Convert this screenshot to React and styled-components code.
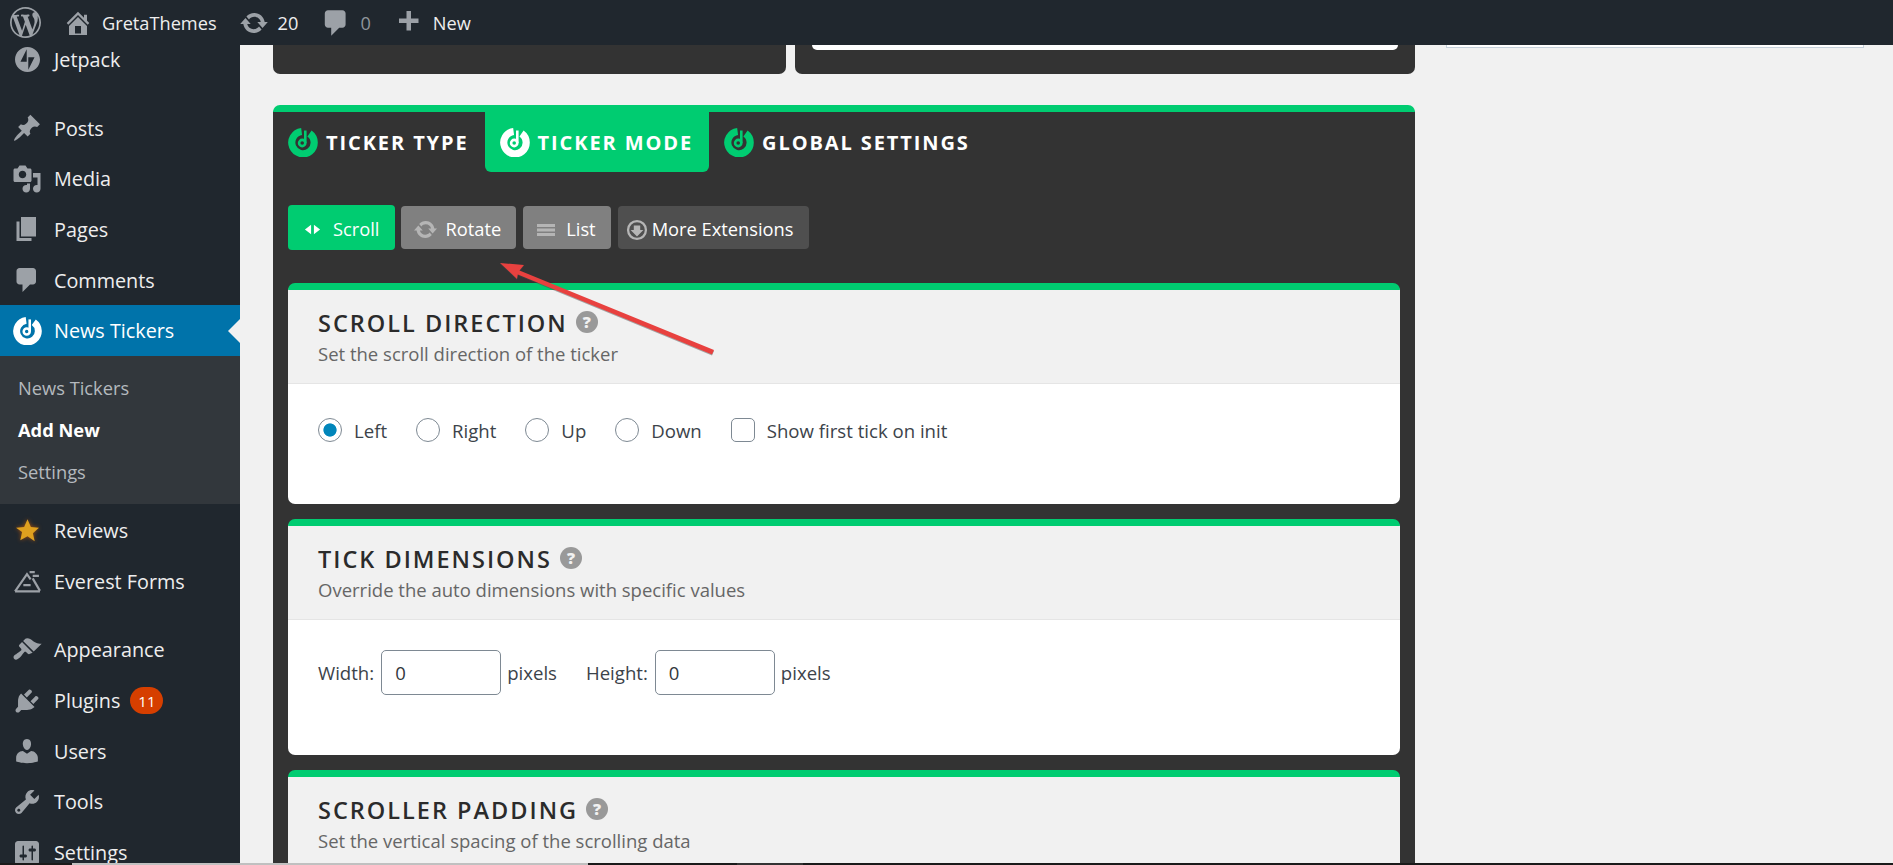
import styled, { createGlobalStyle } from "styled-components"

const GREEN = "#00cc71"

const GlobalStyle = createGlobalStyle`
    html, body {
        margin: 0;
        height: 100%;
        overflow: hidden;
        background: #f1f1f1;
        font-family: "Open Sans", "Noto Sans", sans-serif;
    }
    * { box-sizing: border-box; }
`

const Page = styled.div`
    width: 1893px;
    height: 865px;
    display: flex;
    flex-direction: column;
`

/* top admin bar */
const TopBar = styled.header`
    height: 45px;
    flex: none;
    display: flex;
    align-items: center;
    padding-left: 10px;
    background: #20272e;
`
const BarItem = styled.div`
    display: flex;
    align-items: center;
    gap: ${props => props.$gap ?? 9}px;
    margin-right: 22px;
    font-size: 18.2px;
    color: ${props => props.$dim ? "#8f959b" : "#eeeeee"};
`

const Svg = styled.svg`
    flex: none;
    width: ${props => props.$size ?? 30}px;
    height: ${props => props.$size ?? 30}px;
    fill: ${props => props.$color ?? "#9ca1a7"};
`

const Icon = ({ d, size, color, box = 20 }) => (
    <Svg viewBox={`0 0 ${box} ${box}`} $size={size} $color={color}><path d={d} /></Svg>
)

const paths = {
    wp: "M20 10c0-5.51-4.49-10-10-10C4.48 0 0 4.49 0 10c0 5.52 4.48 10 10 10 5.51 0 10-4.48 10-10zM7.78 15.37L4.37 6.22c.55-.02 1.17-.08 1.17-.08.5-.06.44-1.13-.06-1.11 0 0-1.45.11-2.37.11-.18 0-.37 0-.58-.01C4.12 2.69 6.87 1.11 10 1.11c2.33 0 4.45.87 6.05 2.34-.68-.11-1.65.39-1.65 1.58 0 .74.45 1.36.9 2.1.35.61.55 1.36.55 2.46 0 1.49-1.4 5-1.4 5l-3.03-8.37c.54-.02.82-.17.82-.17.5-.05.44-1.25-.06-1.22 0 0-1.44.12-2.38.12-.87 0-2.33-.12-2.33-.12-.5-.03-.56 1.2-.06 1.22l.92.08 1.26 3.41zM17.41 10c.24-.64.74-1.87.43-4.25.7 1.29 1.05 2.71 1.05 4.25 0 3.29-1.73 6.24-4.4 7.78.97-2.59 1.94-5.2 2.92-7.78zM6.1 18.09C3.12 16.65 1.11 13.53 1.11 10c0-1.3.23-2.48.72-3.59C3.25 10.3 4.67 14.2 6.1 18.09zm4.03-6.63l2.58 6.98c-.86.29-1.76.45-2.71.45-.79 0-1.57-.11-2.29-.33.81-2.38 1.62-4.74 2.42-7.1z",
    home: "M16 8.5l1.53 1.53-1.06 1.06L10 4.62l-6.47 6.47-1.06-1.06L10 2.5l4 4v-2h2v4zm-6-2.46l6 5.99V18H4v-5.97zM12 17v-5H8v5h4z",
    update: "M10.2 3.28c3.53 0 6.43 2.61 6.92 6h2.08l-3.5 4-3.5-4h2.32c-.45-1.97-2.21-3.45-4.32-3.45-1.45 0-2.73.71-3.54 1.78L4.95 5.66C6.23 4.2 8.11 3.28 10.2 3.28zm-.4 13.44c-3.52 0-6.43-2.61-6.92-6H.8l3.5-4c1.17 1.33 2.33 2.67 3.5 4H5.48c.45 1.97 2.21 3.45 4.32 3.45 1.45 0 2.73-.71 3.54-1.78l1.71 1.95c-1.28 1.46-3.15 2.38-5.25 2.38z",
    comment: "M5 2h9c1.1 0 2 .9 2 2v7c0 1.1-.9 2-2 2h-2l-5 5v-5H5c-1.1 0-2-.9-2-2V4c0-1.1.9-2 2-2z",
    plus: "M17 7v3h-5v5H9v-5H4V7h5V2h3v5h5z",
    post: "M10.44 3.02l1.82-1.82 6.36 6.35-1.83 1.82c-1.05-.68-2.48-.57-3.41.36l-.75.75c-.92.93-1.04 2.35-.35 3.41l-1.83 1.82-2.41-2.41-2.8 2.79c-.42.42-3.38 2.71-3.8 2.29s1.86-3.39 2.28-3.81l2.79-2.79L4.1 9.36l1.83-1.82c1.05.69 2.48.57 3.4-.36l.75-.75c.93-.92 1.05-2.35.36-3.41z",
    media: "M13 11V4c0-.55-.45-1-1-1h-1.67L9 1H5L3.67 3H2c-.55 0-1 .45-1 1v7c0 .55.45 1 1 1h10c.55 0 1-.45 1-1zM7 4.5c1.38 0 2.5 1.12 2.5 2.5S8.38 9.5 7 9.5 4.5 8.38 4.5 7 5.62 4.5 7 4.5zM14 6h5v10.5c0 1.38-1.12 2.5-2.5 2.5S14 17.88 14 16.5s1.12-2.5 2.5-2.5c.17 0 .34.02.5.05V9h-3V6zm-4 8.05V13h2v3.5c0 1.38-1.12 2.5-2.5 2.5S7 17.88 7 16.5 8.12 14 9.5 14c.17 0 .34.02.5.05z",
    page: "M6 15V2h10v13H6zm-1 1h8v2H3V5h2v11z",
    appearance: "M14.48 11.06L7.41 3.99l1.5-1.5c.5-.56 2.3-.47 3.51.32 1.21.8 1.43 1.28 2.91 2.1 1.18.64 2.45 1.26 4.45.85zm-.71.71L6.7 4.7 4.93 6.47c-.39.39-.39 1.02 0 1.41l1.06 1.06c.39.39.39 1.03 0 1.42-.6.6-1.43 1.11-2.21 1.69-.35.26-.7.53-1.01.84C1.43 13.23.4 14.85 1.5 15.96c1.1 1.1 2.73.07 4.07-1.27.31-.31.58-.66.85-1.01.58-.78 1.09-1.61 1.69-2.21.39-.39 1.02-.39 1.41 0l1.06 1.06c.39.39 1.02.39 1.41 0z",
    plugins: "M13.11 4.36L9.87 7.6 8 5.73l3.24-3.24c.35-.34 1.05-.2 1.56.32.52.51.66 1.21.31 1.55zm-8 1.77l.91-1.12 9.01 9.01-1.19.84c-.71.71-2.63 1.16-3.82 1.16H6.14L4.9 17.26c-.59.59-1.54.59-2.12 0-.59-.58-.59-1.53 0-2.12l1.24-1.24v-3.88c0-1.13.4-3.19 1.09-3.89zm7.26 3.97l3.24-3.24c.34-.35 1.04-.21 1.55.31.52.51.66 1.21.31 1.55l-3.24 3.25z",
    users: "M10 9.25c-2.27 0-2.73-3.44-2.73-3.44C7 4.02 7.82 2 9.97 2c2.16 0 2.98 2.02 2.71 3.81 0 0-.41 3.44-2.68 3.44zm0 2.57L12.72 10c2.39 0 4.52 2.33 4.52 4.53v2.49s-3.65 1.13-7.24 1.13c-3.65 0-7.24-1.13-7.24-1.13v-2.49c0-2.25 1.94-4.48 4.47-4.48z",
    tools: "M16.68 9.77c-1.34 1.34-3.3 1.67-4.95.99l-5.41 6.52c-.99.99-2.59.99-3.58 0s-.99-2.59 0-3.57l6.52-5.42c-.68-1.65-.35-3.61.99-4.95 1.28-1.28 3.12-1.62 4.72-1.06l-2.89 2.89 2.82 2.82 2.86-2.87c.53 1.58.18 3.39-1.08 4.65zM3.81 16.21c.4.39 1.04.39 1.43 0 .4-.4.4-1.04 0-1.43-.39-.4-1.03-.4-1.43 0-.39.39-.39 1.03 0 1.43z",
    settings: "M18 16V4c0-1.1-.9-2-2-2H4c-1.1 0-2 .9-2 2v12c0 1.1.9 2 2 2h12c1.1 0 2-.9 2-2zM8 11h1c.55 0 1 .45 1 1s-.45 1-1 1H8v1.5c0 .28-.22.5-.5.5s-.5-.22-.5-.5V13H6c-.55 0-1-.45-1-1s.45-1 1-1h1V5.5c0-.28.22-.5.5-.5s.5.22.5.5V11zm5-2h-1c-.55 0-1-.45-1-1s.45-1 1-1h1V5.5c0-.28.22-.5.5-.5s.5.22.5.5V7h1c.55 0 1 .45 1 1s-.45 1-1 1h-1v5.5c0 .28-.22.5-.5.5s-.5-.22-.5-.5V9z",
    jetpack: "M16 0C7.2 0 0 7.2 0 16s7.2 16 16 16 16-7.2 16-16S24.8 0 16 0zM15 19H7l8-16v16zm2 10V13h8l-8 16z",
}

// the plugin's round logo: an open ring with a small note inside
const TickerLogo = ({ color, size = 30 }) => (
    <Svg viewBox="0 0 30 30" $size={size} $color="none">
        <path d="M13.6 4.5 A11.2 11.2 0 1 0 21.5 6.5" stroke={color} strokeWidth="7.2" fill="none" />
        <circle cx="14.2" cy="16" r="3.1" stroke={color} strokeWidth="2.6" fill="none" />
        <path d="M17.3 16 V3.5" stroke={color} strokeWidth="2.6" fill="none" />
    </Svg>
)

const Star = () => (
    <Svg viewBox="0 0 24 24" $size={27} $color="#dfa01f" style={{ filter: "drop-shadow(0 0 2px #a4500e)" }}>
        <path d="M12 2l3 6.8 7.2.7-5.4 4.9 1.6 7.2L12 17l-6.4 3.6 1.6-7.2L1.8 9.5 9 8.8z" />
    </Svg>
)

const EverestIcon = () => (
    <Svg viewBox="0 0 26 22" $size={27} $color="none">
        <path d="M1 20.5 L12.5 4 L16 9 M1 20.5 H25" stroke="#9ca1a7" strokeWidth="2.1" fill="none" />
        <path d="M18 8 L25 20" stroke="#9ca1a7" strokeWidth="2.1" fill="none" />
        <path d="M9 14.5 h7 M15 2 h5 M18 5.5 h6" stroke="#9ca1a7" strokeWidth="2.1" fill="none" />
    </Svg>
)

/* left menu */
const Body = styled.div`
    flex: 1;
    min-height: 0;
    display: flex;
    position: relative;
    overflow: hidden;
`
const Sidebar = styled.nav`
    width: 240px;
    flex: none;
    background: #20272e;
`
const MenuList = styled.div`
    margin-top: -11px;
`
const MenuItem = styled.div`
    height: 50.7px;
    display: flex;
    align-items: center;
    gap: 12px;
    padding-left: 12px;
    position: relative;
    font-size: 19.8px;
    color: ${props => props.$active ? "#ffffff" : "#eeeeee"};
    background: ${props => props.$active ? "#0073aa" : "transparent"};
    margin-bottom: ${props => props.$gapBelow ?? 0}px;

    ${props => props.$active && `
        &::after {
            content: "";
            position: absolute;
            right: 0;
            top: 14px;
            border: 12px solid transparent;
            border-left: 0;
            border-right-color: #f1f1f1;
        }
    `}
`
const IconSlot = styled.span`
    width: 30px;
    height: 30px;
    flex: none;
    display: flex;
    align-items: center;
    justify-content: center;
`
const SubMenu = styled.div`
    padding: 11px 0;
    margin-bottom: 1px;
    background: #32373c;
`
const SubItem = styled.div`
    height: 42px;
    display: flex;
    align-items: center;
    padding: 0 0 2px 18px;
    font-size: 18.3px;
    font-weight: ${props => props.$current ? 700 : 400};
    color: ${props => props.$current ? "#ffffff" : "#b4b9be"};
`
const Badge = styled.span`
    height: 27px;
    padding: 0 8px;
    margin-left: -2px;
    display: flex;
    align-items: center;
    border-radius: 14px;
    background: #d63f00;
    color: #ffffff;
    font-size: 15px;
`

/* content */
const Main = styled.main`
    flex: 1;
    display: flex;
    align-items: flex-start;
    padding-left: 33px;
    background: #f1f1f1;
`
const Column = styled.div`
    width: 1142px;
    flex: none;
`
const TopPanels = styled.div`
    display: flex;
    gap: 9px;
    height: 29px;
`
const TopPanel = styled.div`
    flex: 0 0 ${props => props.$width}px;
    height: 29px;
    padding: 0 17px;
    background: #333333;
    border-radius: 0 0 7px 7px;
`
const TopPanelInner = styled.div`
    height: 5px;
    background: #ffffff;
    border-radius: 0 0 6px 6px;
`
const SideWidget = styled.aside`
    width: 418px;
    height: 3px;
    margin-left: 31px;
    background: #ffffff;
    border: 1px solid #c5d0da;
    border-top: 0;
`
const Panel = styled.section`
    margin-top: 31px;
    background: #333333;
    border-top: 7px solid ${GREEN};
    border-radius: 7px 7px 0 0;
`
const Tabs = styled.div`
    display: flex;
    height: 60px;
`
const Tab = styled.div`
    display: flex;
    align-items: center;
    gap: 8px;
    padding: 0 16px 0 15px;
    font-size: 20px;
    font-weight: 700;
    letter-spacing: 1.9px;
    color: #ffffff;
    border-radius: 0 0 6px 6px;
    background: ${props => props.$active ? GREEN : "transparent"};
`
const PanelBody = styled.div`
    padding: 33px 15px 0;
`
const ModeButtons = styled.div`
    display: flex;
    align-items: center;
    gap: 7px;
    margin-bottom: 33px;

    & > :first-child {
        margin-right: -1px;
    }
`
const ModeButton = styled.button`
    height: ${props => props.$active ? 45 : 43}px;
    display: flex;
    align-items: center;
    gap: ${props => props.$gap}px;
    padding: 2px ${props => props.$right}px 0 ${props => props.$left}px;
    border: 0;
    border-radius: 4px;
    font-family: inherit;
    font-size: 18.3px;
    color: #ffffff;
    background: ${props => props.$bg};
`
const ModeGlyph = styled.span`
    display: flex;
    margin-top: 2px;
`

const Card = styled.div`
    margin-bottom: 15px;
    background: #ffffff;
    border-top: 7px solid ${GREEN};
    border-radius: 7px;
    overflow: hidden;
`
const CardHead = styled.div`
    padding: 18px 30px 17px;
    background: #f1f1f1;
    border-bottom: 1px solid #e5e5e5;
`
const CardTitle = styled.h3`
    margin: 0;
    display: flex;
    align-items: flex-start;
    gap: 8px;
    height: 30px;
    line-height: 30px;
    font-size: 23.5px;
    font-weight: 600;
    letter-spacing: 2px;
    color: #2b2b2b;
`
const Help = styled.span`
    width: 22px;
    height: 22px;
    margin-top: 3px;
    display: flex;
    align-items: center;
    justify-content: center;
    border-radius: 50%;
    background: #999999;
    color: #f1f1f1;
    font-size: 16px;
    line-height: 22px;
    font-weight: 800;
    letter-spacing: 0;
`
const CardHint = styled.p`
    margin: 4px 0 0;
    line-height: 24px;
    font-size: 18.5px;
    color: #666666;
`
const CardBody = styled.div`
    height: ${props => props.$height}px;
    padding: ${props => props.$top}px 30px 0;
    display: flex;
    align-items: flex-start;
    font-size: 18.6px;
    color: #3c434a;
`
const Choice = styled.label`
    height: 24px;
    display: flex;
    align-items: center;
    gap: 12px;
    margin-right: 29px;
`
const Mark = styled.input`
    appearance: none;
    width: 24px;
    height: 24px;
    margin: 0;
    background: #ffffff;
    border: 1px solid #7e8993;
    border-radius: ${props => props.type === "radio" ? "50%" : "5px"};

    &:checked {
        background: radial-gradient(circle, #0085ba 0 6.2px, #ffffff 7px);
    }
`
const Field = styled.div`
    height: 45px;
    display: flex;
    align-items: center;
    gap: 6px;
    margin-right: 29px;
`
const NumberInput = styled.input`
    width: 120px;
    height: 45px;
    margin-left: 1px;
    padding: 0 13px;
    font-family: inherit;
    font-size: 18.5px;
    color: #32373c;
    background: #ffffff;
    border: 1px solid #7e8993;
    border-radius: 5px;
`

/* the red arrow someone drew over the screenshot */
const Annotation = styled.svg`
    position: absolute;
    left: 495px;
    top: 215px;
    width: 225px;
    height: 100px;
    pointer-events: none;
    filter: drop-shadow(0 1px 0 rgba(70, 70, 70, 0.45));
`

const Scrollbar = styled.div`
    height: 2px;
    flex: none;
    display: flex;
    background: #1a1a1a;
`
const ScrollThumb = styled.div`
    width: ${props => props.$width}px;
    margin-left: ${props => props.$left}px;
    background: ${props => props.$color};
`

const menuTop = [
    ["Posts", paths.post],
    ["Media", paths.media],
    ["Pages", paths.page],
    ["Comments", paths.comment],
]

const SectionCard = ({ title, hint, children }) => (
    <Card>
        <CardHead>
            <CardTitle>{title}<Help>?</Help></CardTitle>
            <CardHint>{hint}</CardHint>
        </CardHead>
        {children}
    </Card>
)

const App = () => (
    <Page>
        <GlobalStyle />
        <TopBar>
            <BarItem><Icon d={paths.wp} size={31} /></BarItem>
            <BarItem><Icon d={paths.home} />GretaThemes</BarItem>
            <BarItem><Icon d={paths.update} />20</BarItem>
            <BarItem $gap={8} $dim><Icon d={paths.comment} size={32} />0</BarItem>
            <BarItem $gap={10}><Icon d={paths.plus} />New</BarItem>
        </TopBar>
        <Body>
            <Sidebar>
                <MenuList>
                    <MenuItem $gapBelow={18}>
                        <IconSlot><Icon d={paths.jetpack} box={32} size={25} /></IconSlot>Jetpack
                    </MenuItem>
                    {menuTop.map(([label, d]) => (
                        <MenuItem key={label}><IconSlot><Icon d={d} /></IconSlot>{label}</MenuItem>
                    ))}
                    <MenuItem $active>
                        <IconSlot><TickerLogo color="#ffffff" size={29} /></IconSlot>News Tickers
                    </MenuItem>
                    <SubMenu>
                        <SubItem>News Tickers</SubItem>
                        <SubItem $current>Add New</SubItem>
                        <SubItem>Settings</SubItem>
                    </SubMenu>
                    <MenuItem><IconSlot><Star /></IconSlot>Reviews</MenuItem>
                    <MenuItem $gapBelow={18}><IconSlot><EverestIcon /></IconSlot>Everest Forms</MenuItem>
                    <MenuItem><IconSlot><Icon d={paths.appearance} /></IconSlot>Appearance</MenuItem>
                    <MenuItem><IconSlot><Icon d={paths.plugins} /></IconSlot>Plugins<Badge>11</Badge></MenuItem>
                    <MenuItem><IconSlot><Icon d={paths.users} /></IconSlot>Users</MenuItem>
                    <MenuItem><IconSlot><Icon d={paths.tools} /></IconSlot>Tools</MenuItem>
                    <MenuItem><IconSlot><Icon d={paths.settings} /></IconSlot>Settings</MenuItem>
                </MenuList>
            </Sidebar>
            <Main>
                <Column>
                    <TopPanels>
                        <TopPanel $width={513} />
                        <TopPanel $width={620}><TopPanelInner /></TopPanel>
                    </TopPanels>
                    <Panel>
                        <Tabs>
                            <Tab><TickerLogo color={GREEN} />TICKER TYPE</Tab>
                            <Tab $active><TickerLogo color="#ffffff" />TICKER MODE</Tab>
                            <Tab><TickerLogo color={GREEN} />GLOBAL SETTINGS</Tab>
                        </Tabs>
                        <PanelBody>
                            <ModeButtons>
                                <ModeButton $active $bg={GREEN} $left={16} $right={16} $gap={12}>
                                    <ModeGlyph>
                                        <Svg viewBox="0 0 18 12" $size={17} $color="#ffffff"><path d="M7.5 1v10L1 6zM10.5 1v10L17 6z" /></Svg>
                                    </ModeGlyph>
                                    Scroll
                                </ModeButton>
                                <ModeButton $bg="#808080" $left={12} $right={15} $gap={7}>
                                    <ModeGlyph><Icon d={paths.update} size={25} color="#b5b5b5" /></ModeGlyph>
                                    Rotate
                                </ModeButton>
                                <ModeButton $bg="#808080" $left={14} $right={15} $gap={11}>
                                    <ModeGlyph>
                                        <Svg viewBox="0 0 18 18" $size={18} $color="#b5b5b5"><path d="M0 3h18v3H0zM0 7.5h18v3H0zM0 12h18v3H0z" /></Svg>
                                    </ModeGlyph>
                                    List
                                </ModeButton>
                                <ModeButton $bg="#4f4f4f" $left={8} $right={15} $gap={4}>
                                    <ModeGlyph>
                                        <Svg viewBox="0 0 24 24" $size={22} $color="#b5b5b5">
                                            <path d="M12 1a11 11 0 1 0 0 22 11 11 0 0 0 0-22zm0 2.5a8.5 8.5 0 1 1 0 17 8.5 8.5 0 0 1 0-17z" />
                                            <path d="M8.5 7h7v5H19l-7 7-7-7h3.5z" />
                                        </Svg>
                                    </ModeGlyph>
                                    More Extensions
                                </ModeButton>
                            </ModeButtons>
                            <SectionCard title="SCROLL DIRECTION" hint="Set the scroll direction of the ticker">
                                <CardBody $height={120} $top={34}>
                                    <Choice><Mark type="radio" name="dir" defaultChecked />Left</Choice>
                                    <Choice><Mark type="radio" name="dir" />Right</Choice>
                                    <Choice><Mark type="radio" name="dir" />Up</Choice>
                                    <Choice><Mark type="radio" name="dir" />Down</Choice>
                                    <Choice><Mark type="checkbox" />Show first tick on init</Choice>
                                </CardBody>
                            </SectionCard>
                            <SectionCard title="TICK DIMENSIONS" hint="Override the auto dimensions with specific values">
                                <CardBody $height={135} $top={30}>
                                    <Field>Width:<NumberInput defaultValue="0" />pixels</Field>
                                    <Field>Height:<NumberInput defaultValue="0" />pixels</Field>
                                </CardBody>
                            </SectionCard>
                            <SectionCard title="SCROLLER PADDING" hint="Set the vertical spacing of the scrolling data" />
                        </PanelBody>
                    </Panel>
                </Column>
                <SideWidget />
            </Main>
            <Annotation viewBox="0 0 225 100">
                <path d="M5 3 L29 5 L24.5 10.5 L219 90 L217 94.5 L22.8 14.5 L22 19 z" fill="#e8413f" />
            </Annotation>
        </Body>
        <Scrollbar>
            <ScrollThumb $left={72} $width={516} $color="#c0c0c0" />
            <ScrollThumb $left={149} $width={66} $color="#333333" />
        </Scrollbar>
    </Page>
)

export default App
